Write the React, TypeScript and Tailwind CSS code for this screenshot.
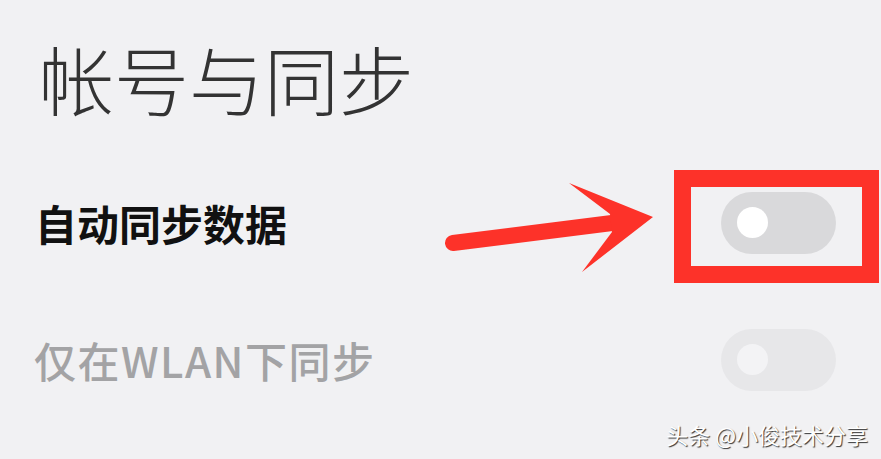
import React from 'react';

const font = "font-['Noto_Sans_CJK_SC','Noto_Sans',sans-serif]";

function Toggle({ dim }: { dim?: boolean }) {
  return (
    <div
      className={
        'flex h-[62px] w-[115px] items-center rounded-full pl-[16px] ' +
        (dim ? 'bg-[#e7e7e9]' : 'bg-[#d9d9db]')
      }
    >
      <div className={'h-[31px] w-[31px] rounded-full ' + (dim ? 'bg-[#f3f3f5]' : 'bg-white')} />
    </div>
  );
}

export default function App() {
  return (
    <div className={`relative h-[459px] w-[881px] overflow-hidden bg-[#f1f1f3] ${font}`}>
      <div className="flex h-[154px] items-center pl-[39px]">
        <h1 className="text-[75px] font-light leading-none text-[#333333]">帐号与同步</h1>
      </div>

      <div className="flex h-[137px] items-center justify-between pl-[35px] pr-[45px]">
        <span className="text-[42px] font-bold leading-none text-[#111111]">自动同步数据</span>
        <Toggle />
      </div>

      <div className="flex h-[137px] items-center justify-between pl-[34px] pr-[45px]">
        <span className="text-[42px] font-medium leading-none tracking-[1.5px] text-[#a3a3a5]">仅在WLAN下同步</span>
        <Toggle dim />
      </div>

      {/* annotation: arrow + frame */}
      <svg className="pointer-events-none absolute inset-0" width="881" height="459" viewBox="0 0 881 459">
        <line x1="453" y1="243" x2="612" y2="223" stroke="#fd3229" strokeWidth="16" strokeLinecap="round" />
        <polygon points="653,217 569,183 610,214 612,232 582,272" fill="#fd3229" />
      </svg>
      <div className="pointer-events-none absolute left-[674px] top-[170px] h-[113px] w-[205px] border-[17px] border-[#fd3229]" />

      <div className="absolute bottom-[14px] right-[13px] text-[22px] leading-none text-white [text-shadow:1px_1px_1px_rgba(0,0,0,0.8)]">
        头条 @小俊技术分享
      </div>
    </div>
  );
}
